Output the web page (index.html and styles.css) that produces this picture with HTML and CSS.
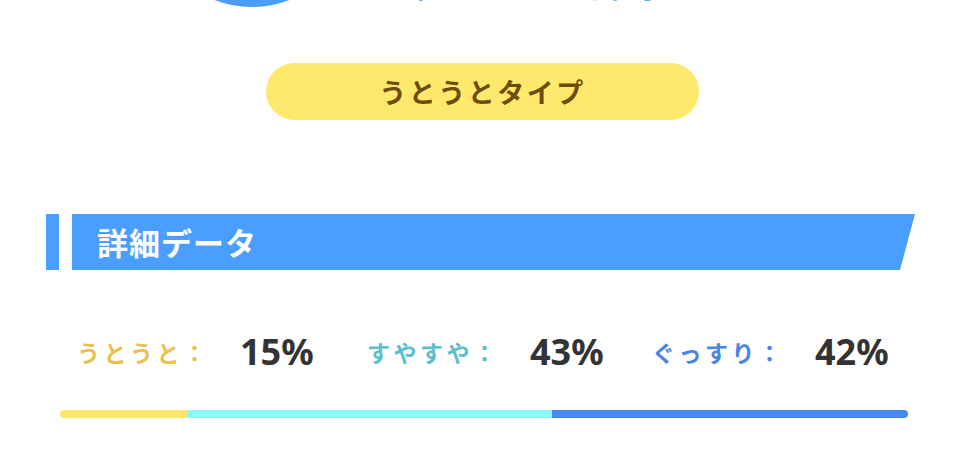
FILE: index.html
```html
<!DOCTYPE html>
<html lang="ja">
<head>
<meta charset="utf-8">
<link rel="stylesheet" href="styles.css">
</head>
<body>
<div class="top">
  <div class="avatar"></div>
  <span class="top-text t1">睡眠</span>
  <span class="top-text t2">週平均</span>
</div>
<div class="pill-wrap">
  <div class="pill">うとうとタイプ</div>
</div>
<div class="section-head">
  <div class="head-mark"></div>
  <div class="head-bar">詳細データ</div>
</div>
<div class="stats">
  <div class="stat">
    <span class="label l-yellow">うとうと：</span>
    <span class="value">15%</span>
  </div>
  <div class="stat">
    <span class="label l-teal">すやすや：</span>
    <span class="value">43%</span>
  </div>
  <div class="stat">
    <span class="label l-blue">ぐっすり：</span>
    <span class="value">42%</span>
  </div>
</div>
<div class="bar">
  <div class="seg seg-yellow" style="width:15%"></div>
  <div class="seg seg-cyan" style="width:43%"></div>
  <div class="seg seg-blue" style="width:42%"></div>
</div>
</body>
</html>
```

FILE: styles.css
```css
* { box-sizing: border-box; }
html, body {
  margin: 0;
  padding: 0;
  background: #ffffff;
  width: 968px;
  height: 458px;
  overflow: hidden;
  font-family: "Noto Sans CJK JP", "Noto Sans", sans-serif;
}
.top {
  height: 8px;
  overflow: hidden;
  display: flex;
  align-items: flex-end;
  position: relative;
}
.avatar {
  width: 208px;
  height: 208px;
  border-radius: 50%;
  background: #4a9cf6;
  margin-left: 148px;
  margin-bottom: 1px;
  flex: none;
}
.top-text {
  color: #5aa4f5;
  font-size: 26px;
  font-weight: 700;
  line-height: 26px;
  margin-bottom: 8px;
  flex: none;
}
.t1 { margin-left: 16px; }
.t2 { margin-left: 152px; }

.pill-wrap {
  margin-top: 55px;
  padding-left: 266px;
}
.pill {
  width: 433px;
  height: 57px;
  border-radius: 29px;
  background: #ffe96c;
  color: #6e4c0c;
  font-size: 27px;
  font-weight: 700;
  letter-spacing: 2.5px;
  display: flex;
  align-items: center;
  justify-content: center;
}
.section-head {
  margin-top: 94px;
  display: flex;
  padding-left: 46px;
  gap: 13px;
  height: 56px;
}
.head-mark {
  width: 13px;
  background: #4a9eff;
}
.head-bar {
  width: 843px;
  background: #4a9eff;
  clip-path: polygon(0 0, 100% 0, calc(100% - 15px) 100%, 0 100%);
  color: #ffffff;
  font-size: 31px;
  font-weight: 700;
  letter-spacing: 1px;
  display: flex;
  align-items: center;
  padding-left: 25px;
  padding-bottom: 2px;
}
.stats {
  margin-top: 57px;
  height: 40px;
  padding-left: 77px;
  display: grid;
  grid-template-columns: 290px 285px auto;
  align-items: center;
}
.stat {
  display: flex;
  align-items: center;
}
.label {
  width: 163px;
  font-size: 23px;
  font-weight: 700;
  letter-spacing: 3.5px;
  flex: none;
}
.l-yellow { color: #e9c24c; }
.l-teal { color: #5cbfc9; }
.l-blue { color: #4a86e0; }
.value {
  font-family: "Noto Sans", sans-serif;
  font-size: 36px;
  font-weight: 700;
  color: #333333;
}
.bar {
  margin: 43px 0 0 60px;
  width: 848px;
  height: 8px;
  border-radius: 4px;
  overflow: hidden;
  display: flex;
}
.seg { height: 100%; }
.seg-yellow { background: #ffe76e; }
.seg-cyan { background: #8cf8fa; }
.seg-blue { background: #4a88f0; }
```
